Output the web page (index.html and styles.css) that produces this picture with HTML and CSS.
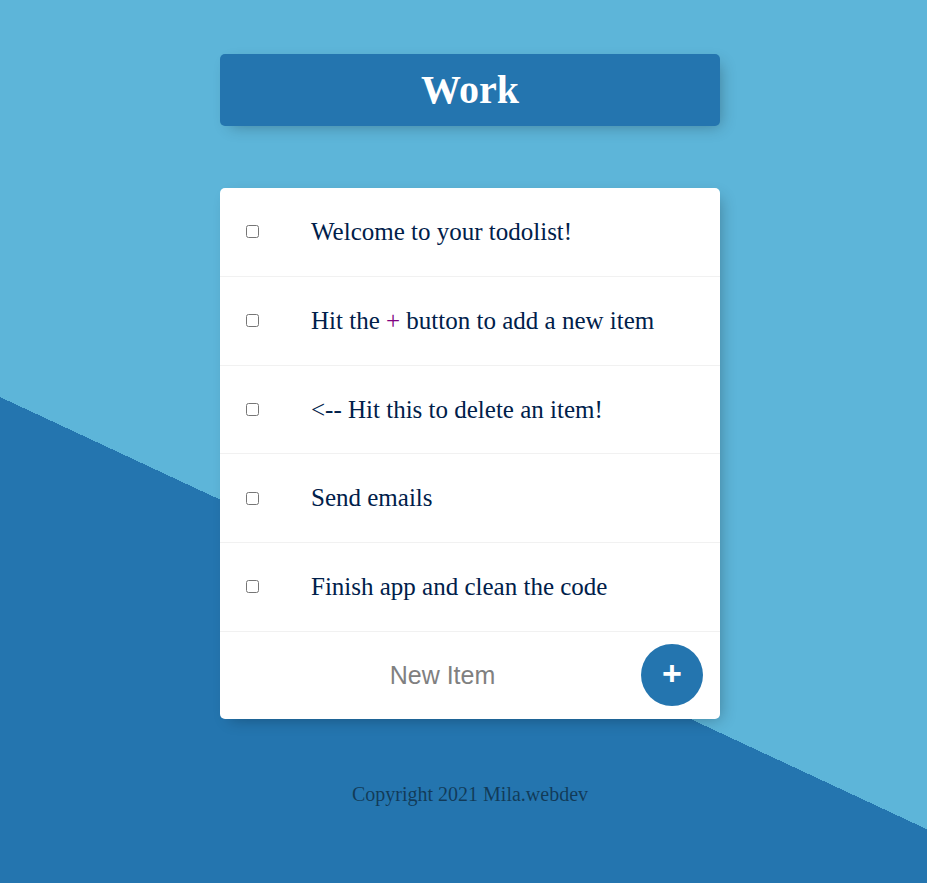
FILE: index.html
```html
<!DOCTYPE html>
<html lang="en">
<head>
<meta charset="utf-8">
<title>To Do List</title>
<link rel="stylesheet" href="styles.css">
</head>
<body>
  <div class="box heading">
    <h1>Work</h1>
  </div>

  <div class="box list">
    <form class="item">
      <input type="checkbox" class="check">
      <p>Welcome to your todolist!</p>
    </form>
    <form class="item">
      <input type="checkbox" class="check">
      <p>Hit the <span class="plus">+</span> button to add a new item</p>
    </form>
    <form class="item">
      <input type="checkbox" class="check">
      <p>&lt;-- Hit this to delete an item!</p>
    </form>
    <form class="item">
      <input type="checkbox" class="check">
      <p>Send emails</p>
    </form>
    <form class="item">
      <input type="checkbox" class="check">
      <p>Finish app and clean the code</p>
    </form>
    <form class="item new-item">
      <input type="text" class="new-input" name="newItem" placeholder="New Item" autocomplete="off">
      <button type="button" class="add">+</button>
    </form>
  </div>

  <footer class="footer">Copyright 2021 Mila.webdev</footer>
</body>
</html>
```

FILE: styles.css
```css
html {
  height: 100%;
  background-color: #5DB5D9;
  background-image: linear-gradient(25deg, #2475AF 36.95%, #5DB5D9 36.95%);
}

body {
  margin: 0 0 0 13px;
  padding-top: 54px;
  font-family: "Liberation Serif", "Times New Roman", serif;
}

.box {
  width: 500px;
  margin: 0 auto;
  background: #ffffff;
  border-radius: 5px;
  box-shadow: 5px 5px 15px -5px rgba(0, 0, 0, 0.3);
}

.heading {
  background-color: #2475AF;
  text-align: center;
}

.heading h1 {
  margin: 0;
  padding: 13px 10px;
  font-size: 40px;
  line-height: 46px;
  font-weight: bold;
  color: #ffffff;
}

.list {
  margin-top: 62px;
}

.item {
  display: flex;
  align-items: center;
  border-bottom: 1px solid #F1F1F1;
}

.item:last-child {
  border-bottom: 0;
}

.check {
  margin: 0 22px 0 26px;
  width: 13px;
  height: 13px;
}

.item p {
  margin: 0;
  padding: 30px 30px;
  font-size: 25px;
  line-height: 27.75px;
  color: #00204a;
}

.plus {
  color: #800080;
}

.new-item {
  height: 87px;
  padding-left: 24px;
}

.new-input {
  flex: 0 0 397px;
  width: 397px;
  height: 60px;
  padding: 0;
  border: none;
  background: transparent;
  text-align: center;
  font-family: "Liberation Sans", Arial, sans-serif;
  font-size: 25px;
  color: #333;
  outline: none;
}

.new-input::placeholder {
  color: grey;
  opacity: 1;
}

.add {
  flex: 0 0 62px;
  margin-left: auto;
  margin-right: 17px;
  width: 62px;
  height: 62px;
  border: 0;
  border-radius: 50%;
  padding: 0 0 4px 0;
  background-color: #2475AF;
  color: #ffffff;
  font-family: "Liberation Sans", Arial, sans-serif;
  font-size: 34px;
  font-weight: bold;
  line-height: 1;
}

.footer {
  margin-top: 64px;
  text-align: center;
  font-size: 20px;
  color: rgba(0, 0, 0, 0.5);
}
```
